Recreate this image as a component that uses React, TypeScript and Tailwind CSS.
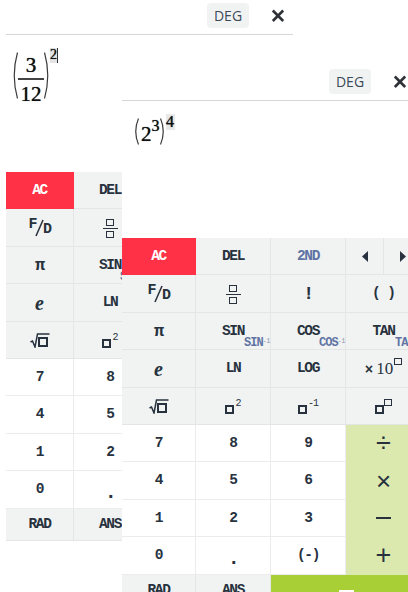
import React from "react";

const INK = "text-[#27323e]";

const Box = ({ small }: { small?: boolean }) => (
  <span className={`inline-block border-[#27323e] ${small ? "w-[8px] h-[7px] border" : "w-[9px] h-[9px] border-2"}`} />
);

const Frac = () => (
  <span className="flex flex-col items-center gap-[2px]">
    <Box small />
    <span className="w-[15px] h-[1px] bg-[#27323e]" />
    <Box small />
  </span>
);

const Sqrt = () => (
  <svg width="20" height="15" viewBox="0 0 20 15" fill="none" stroke="#27323e">
    <path d="M0.5 9 L2.5 8 L5 14 L7.5 1 H19.5" strokeWidth="1.5" />
    <rect x="9" y="5" width="8" height="8" strokeWidth="2" />
  </svg>
);

const Pow = ({ exp }: { exp: React.ReactNode }) => (
  <span className="flex items-start">
    <span className="flex mt-[6px]">
      <Box />
    </span>
    <span className="text-[10px] leading-[9px] ml-[1px] tracking-[-1px] font-normal">{exp}</span>
  </span>
);

const Tri = ({ flip }: { flip?: boolean }) => (
  <svg width="6" height="11" viewBox="0 0 6 11" fill="#27323e" className={flip ? "rotate-180" : ""}>
    <path d="M6 0 V11 L0 5.5 Z" />
  </svg>
);

const Sub = ({ name }: { name: string }) => (
  <span className="absolute right-0 bottom-[1px] text-[12px] leading-[10px] tracking-[-1px] text-[#6073a3] flex items-start">
    {name}
    <span className="text-[7px] leading-[6px] text-[#8d96ad] tracking-[-0.5px] font-normal">-1</span>
  </span>
);

type Kind = "fn" | "num" | "op" | "ac";

const kindClass: Record<Kind, string> = {
  fn: "bg-[#f1f3f3] border-[#e4e6e6]",
  num: "bg-white border-[#ececec]",
  op: "bg-[#dbe9ae] border-[#dbe9ae]",
  ac: "bg-[#ff3146] border-[#ff3146] text-white",
};

const Key = ({
  kind = "fn",
  children,
}: {
  kind?: Kind;
  children?: React.ReactNode;
}) => (
  <div className={`relative flex items-center justify-center pt-[1px] border-r border-b ${kindClass[kind]}`}>
    {children}
  </div>
);

const Keypad = ({ cols }: { cols: string }) => (
  <div
    className={`grid ${cols} grid-rows-[repeat(9,37.4px)_32px] font-["Liberation_Mono",monospace] font-bold text-[14.5px] tracking-[-1.4px] ${INK}`}
  >
    <Key kind="ac">AC</Key>
    <Key>DEL</Key>
    <Key><span className="text-[#6073a3]">2ND</span></Key>
    <div className="flex">
      <div className="flex-1 flex items-center justify-center bg-[#f1f3f3] border-r border-b border-[#e4e6e6]"><Tri /></div>
      <div className="flex-1 flex items-center justify-center bg-[#f1f3f3] border-r border-b border-[#e4e6e6]"><Tri flip /></div>
    </div>

    <Key>
      <span className="flex items-center text-[15px]">
        <span className="mb-[5px]">F</span>
        <svg width="9" height="18" viewBox="0 0 9 18" stroke="#27323e" strokeWidth="1.6" className="-mx-[1px]">
          <path d="M8 1 L1 17" />
        </svg>
        <span className="mt-[5px]">D</span>
      </span>
    </Key>
    <Key><Frac /></Key>
    <Key><span className="text-[18px]">!</span></Key>
    <Key><span className="tracking-[-1px]">( )</span></Key>

    <Key><span className="text-[17px]">π</span></Key>
    <Key>SIN<Sub name="SIN" /></Key>
    <Key>COS<Sub name="COS" /></Key>
    <Key>TAN<Sub name="TAN" /></Key>

    <Key><span className={`font-["Liberation_Serif",serif] italic text-[20px] tracking-normal`}>e</span></Key>
    <Key>LN</Key>
    <Key>LOG</Key>
    <Key>
      <span className="flex items-start">
        <span className="mt-[5px] text-[14px] leading-[14px] mr-[3px] tracking-normal">×</span>
        <span className={`font-["Liberation_Serif",serif] font-normal text-[17px] leading-[20px] tracking-normal mt-[1px]`}>10</span>
        <span className="flex ml-[1px]"><Box small /></span>
      </span>
    </Key>

    <Key><Sqrt /></Key>
    <Key><Pow exp="2" /></Key>
    <Key><Pow exp="-1" /></Key>
    <Key>
      <span className="flex items-start">
        <span className="flex mt-[6px]"><Box /></span>
        <Box small />
      </span>
    </Key>

    <Key kind="num">7</Key>
    <Key kind="num">8</Key>
    <Key kind="num">9</Key>
    <Key kind="op"><span className={`font-["Liberation_Sans",sans-serif] text-[27px] leading-none font-normal tracking-normal`}>÷</span></Key>

    <Key kind="num">4</Key>
    <Key kind="num">5</Key>
    <Key kind="num">6</Key>
    <Key kind="op"><span className={`font-["Liberation_Sans",sans-serif] text-[26px] leading-none font-normal tracking-normal`}>×</span></Key>

    <Key kind="num">1</Key>
    <Key kind="num">2</Key>
    <Key kind="num">3</Key>
    <Key kind="op"><span className="w-[15px] h-[2px] bg-[#27323e]" /></Key>

    <Key kind="num">0</Key>
    <Key kind="num"><span className="mt-[7px] text-[20px] leading-[20px]">.</span></Key>
    <Key kind="num">(-)</Key>
    <Key kind="op"><span className={`font-["Liberation_Sans",sans-serif] text-[27px] leading-none font-normal tracking-normal`}>+</span></Key>

    <Key>RAD</Key>
    <Key>ANS</Key>
    <div className="col-span-2 bg-[#a8cf36] flex justify-center">
      <span className="mt-[15px] w-[15px] h-[2px] bg-white" />
    </div>
  </div>
);

const Header = ({ pad }: { pad: string }) => (
  <div className={`h-[35px] border-b border-[#d6d6d6] flex items-start justify-end gap-[22px] pt-[3px] ${pad}`}>
    <div className={`w-[42px] h-[25px] rounded bg-[#f1f3f3] flex items-center justify-center font-["Open_Sans",sans-serif] text-[14px] text-[#3c4a58]`}>
      DEG
    </div>
    <svg width="14" height="25" viewBox="0 0 14 25" stroke="#2f3338" strokeWidth="2.6" fill="none">
      <path d="M1.8 7.5 L12.2 18 M12.2 7.5 L1.8 18" />
    </svg>
  </div>
);

const Paren = ({ h, w, flip }: { h: number; w: number; flip?: boolean }) => (
  <svg width={w} height={h} viewBox={`0 0 ${w} ${h}`} fill="none" stroke="#3a3a3a" strokeWidth="1.2" className={flip ? "-scale-x-100" : ""}>
    <path d={`M${w - 0.5} 0.5 Q0 ${h / 2} ${w - 0.5} ${h - 0.5}`} />
  </svg>
);

export default function App() {
  const math = `font-["Liberation_Serif",serif] text-[#111] [text-shadow:0_0_0.7px_#111]`;
  return (
    <div className="relative w-[408px] h-[592px] overflow-hidden bg-white">
      {/* back window */}
      <div className="absolute left-[6px] top-0 w-[287px] bg-white">
        <Header pad="pr-2" />
        <div className={`h-[137px] pl-[5px] pt-[13px] flex items-start ${math}`}>
          <div className="flex items-start">
            <span className="mt-[4px]"><Paren w={7} h={47} /></span>
            <div className="flex flex-col items-center w-[26px] text-[21px] leading-[22px]">
              <span className="pt-[6px]">3</span>
              <span className="w-[26px] h-[1.5px] bg-[#444] mt-[2px]" />
              <span className="mt-[3px]">12</span>
            </div>
            <span className="mt-[4px]"><Paren w={7} h={47} flip /></span>
            <span className="bg-[#e4e4e4] h-[15px] w-[8px] text-[14px] leading-[13px] text-center border-r border-[#333] -ml-[1px]">2</span>
          </div>
        </div>
        <Keypad cols="grid-cols-[68px_73px_73px_73px]" />
      </div>

      {/* front window */}
      <div className="absolute left-[122px] top-[66px] w-[300px] bg-white">
        <Header pad="pr-[15px]" />
        <div className={`h-[137px] pl-[11px] pt-[13px] flex items-start ${math}`}>
          <span className="mt-[4px]"><Paren w={6} h={27} /></span>
          <span className="mt-[9px] ml-[2px] text-[21px] leading-[22px]">2</span>
          <span className="mt-[5px] text-[16px] leading-[14px]">3</span>
          <span className="mt-[4px]"><Paren w={6} h={27} flip /></span>
          <span className="bg-[#e9e9e9] w-[9px] h-[16px] text-[16px] leading-[15px] text-center">4</span>
        </div>
        <Keypad cols="grid-cols-[74px_75px_75px_76px]" />
      </div>
    </div>
  );
}
